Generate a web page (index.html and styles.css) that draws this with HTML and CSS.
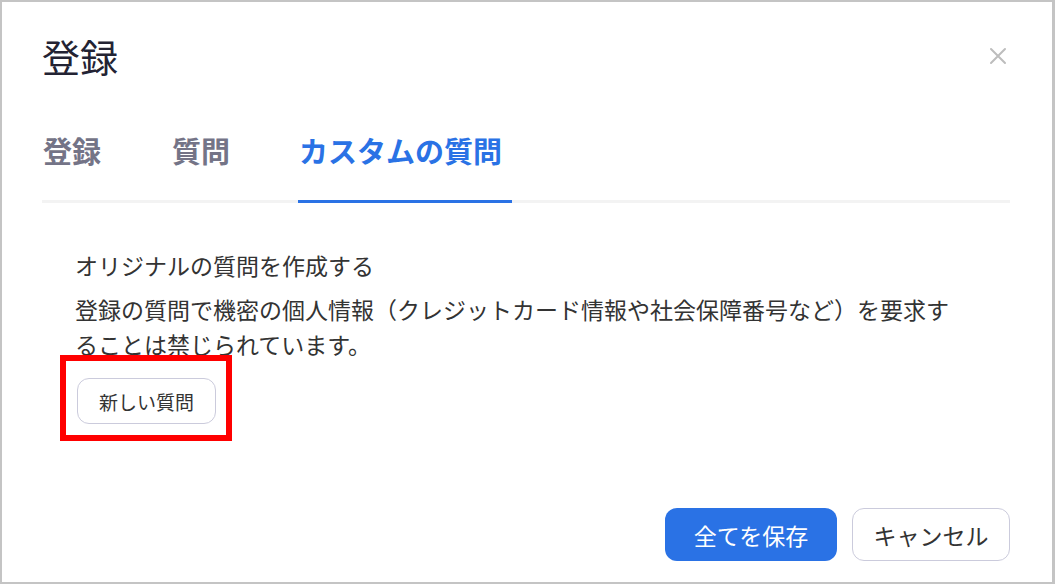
FILE: index.html
```html
<!DOCTYPE html>
<html lang="ja">
<head>
  <meta charset="UTF-8">
  <title>登録</title>
  <link rel="stylesheet" href="styles.css">
</head>
<body>

  <div class="dialog">
    <div class="header">
      <h1>登録</h1>
      <svg class="close" width="18" height="18" viewBox="0 0 18 18">
        <path d="M2 2 L16 16 M16 2 L2 16" stroke="#bdbdbd" stroke-width="2" stroke-linecap="round" fill="none"/>
      </svg>
    </div>

    <div class="tabs">
      <div class="tab">登録</div>
      <div class="tab">質問</div>
      <div class="tab active">カスタムの質問</div>
    </div>

    <div class="content">
      <p class="lead">オリジナルの質問を作成する</p>
      <p class="note">登録の質問で機密の個人情報（クレジットカード情報や社会保障番号など）を要求することは禁じられています。</p>
      <button class="btn-new">新しい質問</button>
    </div>

    <div class="footer">
      <button class="btn-save">全てを保存</button>
      <button class="btn-cancel">キャンセル</button>
    </div>

    <div class="highlight"></div>
  </div>

</body>
</html>
```

FILE: styles.css
```css
body {
  margin: 0;
  font-family: "Noto Sans CJK JP", "Noto Sans", sans-serif;
  background: #fff;
}

.dialog {
  position: relative;
  box-sizing: border-box;
  width: 1055px;
  height: 584px;
  border-style: solid;
  border-color: #c4c4c4;
  border-width: 2px 3px 2px 2px;
  padding: 35px 42px 21px 40px;
  display: flex;
  flex-direction: column;
}

.header {
  display: flex;
  justify-content: space-between;
}

h1 {
  margin: 0;
  font-size: 38px;
  line-height: 38px;
  font-weight: 400;
  color: #232333;
}

.close {
  margin-top: 10px;
  margin-right: 3px;
}

.tabs {
  display: flex;
  gap: 70px;
  margin-top: 60px;
  border-bottom: 3px solid #f3f3f3;
}

.tab {
  font-size: 29px;
  line-height: 30px;
  font-weight: 700;
  color: #747487;
  padding: 0 0 35px 1px;
  margin-bottom: -3px;
  border-bottom: 3px solid transparent;
}

.tab.active {
  color: #2a72e5;
  border-bottom-color: #2a72e5;
  padding-right: 10px;
  margin-left: -2px;
}

.content {
  padding: 45px 45px 0 33px;
  color: #333;
  font-size: 23px;
  line-height: 35px;
}

.content p {
  margin: 0;
}

.note {
  margin-top: 9px !important;
}

.btn-new {
  margin-top: 16px;
  margin-left: 2px;
  height: 46px;
  padding: 0 21px;
  font-family: inherit;
  font-size: 19px;
  color: #333;
  background: #fff;
  border: 1px solid #cbcbdc;
  border-radius: 12px;
}

.footer {
  margin-top: auto;
  display: flex;
  justify-content: flex-end;
  gap: 15px;
}

.footer button {
  height: 53px;
  font-family: inherit;
  font-size: 23px;
  border-radius: 12px;
}

.btn-save {
  width: 172px;
  background: #2a72e5;
  color: #fff;
  border: none;
}

.btn-cancel {
  width: 158px;
  background: #fff;
  color: #333;
  border: 1px solid #cbcbdc;
}

.highlight {
  position: absolute;
  left: 58px;
  top: 353px;
  width: 160px;
  height: 74px;
  border: 6px solid #ff0000;
}
```
